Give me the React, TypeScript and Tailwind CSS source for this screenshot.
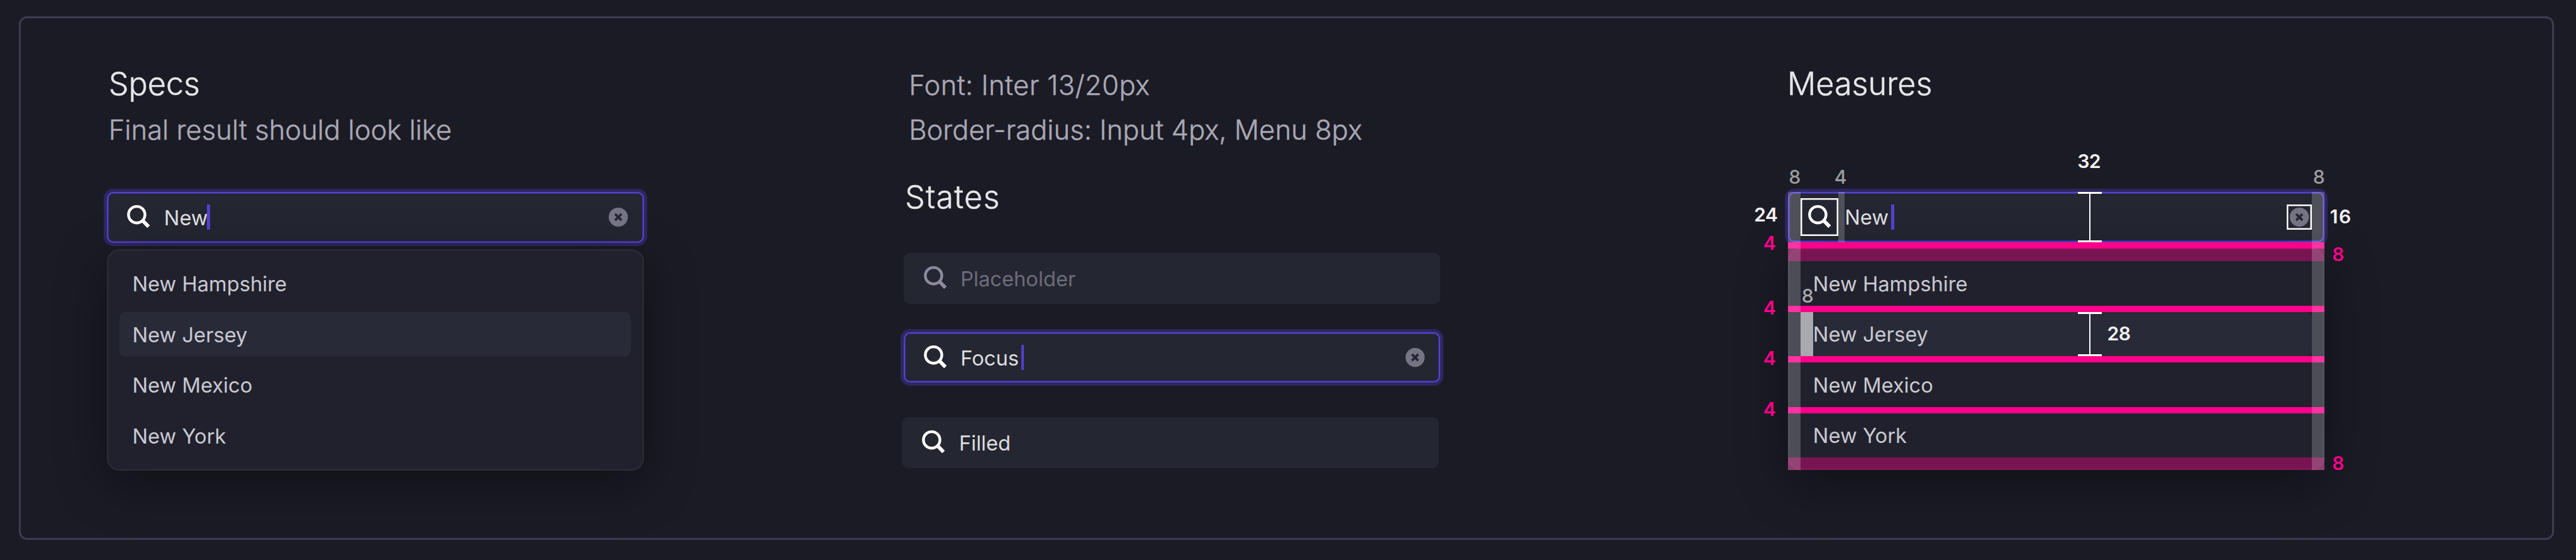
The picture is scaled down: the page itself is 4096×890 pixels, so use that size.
import type { ReactNode } from "react";

function SearchIcon({ muted, outlined }: { muted?: boolean; outlined?: boolean }) {
  return (
    <span
      className={
        "flex h-[60.4px] w-[60.4px] shrink-0 " +
        (muted ? "text-[#8c8ba0] " : "text-white ") +
        (outlined ? "shadow-[inset_0_0_0_2.5px_#ffffff]" : "")
      }
    >
      <svg viewBox="0 0 24 24" className="h-full w-full" fill="none" stroke="currentColor">
        <circle cx="10.9" cy="10.4" r="5.2" strokeWidth="1.75" />
        <path d="M14.3 13.8 18.4 18" strokeWidth="2.3" />
      </svg>
    </span>
  );
}

function ClearIcon({ outlined }: { outlined?: boolean }) {
  return (
    <span
      className={
        "ml-auto flex h-[40.2px] w-[40.2px] shrink-0 " +
        (outlined ? "shadow-[inset_0_0_0_2.5px_#ffffff]" : "")
      }
    >
      <svg viewBox="0 0 16 16" className="h-full w-full" fill="none">
        <circle cx="8" cy="8" r="6.05" fill="#747485" />
        <path d="M6 6l4 4M10 6l-4 4" stroke="#242632" strokeWidth="1.5" />
      </svg>
    </span>
  );
}

type FieldProps = {
  text: string;
  focused?: boolean;
  muted?: boolean;
  outlined?: boolean;
  caret?: string;
};

function Field({ text, focused, muted, outlined, caret }: FieldProps) {
  return (
    <div
      className={
        "flex h-[80.4px] items-center rounded-[10px] bg-[#242631] px-[20.1px] " +
        (focused
          ? "shadow-[inset_0_0_0_2.5px_#5340d0,0_0_0_5px_rgba(83,64,208,0.34)]"
          : "")
      }
    >
      <SearchIcon muted={muted} outlined={outlined} />
      <span
        className={
          "ml-[10.1px] pt-[1.4px] text-[32.7px] leading-[50.3px] " +
          (muted ? "text-[#6c6b7b]" : "text-[#dcdcdf]")
        }
      >
        {text}
      </span>
      {focused && <span className={"h-[40px] bg-[#5340d0] " + caret} />}
      {focused && <ClearIcon outlined={outlined} />}
    </div>
  );
}

const STATES = ["New Hampshire", "New Jersey", "New Mexico", "New York"];

function Menu() {
  return (
    <ul className="mt-[10.1px] flex flex-col gap-[10.1px] rounded-[20px] bg-[#20212d] p-[20.1px] shadow-[inset_0_0_0_2.5px_#2b2a36,0_20px_80px_rgba(0,0,0,0.4)]">
      {STATES.map((name) => (
        <li
          key={name}
          className={
            "flex h-[70.4px] items-center rounded-[10px] px-[20.1px] pt-[0.7px] text-[32.7px] leading-[50.3px] text-[#c9c9d1] " +
            (name === "New Jersey" ? "bg-[#282a38]" : "")
          }
        >
          {name}
        </li>
      ))}
    </ul>
  );
}

function Heading({ children, className }: { children: ReactNode; className: string }) {
  return (
    <h2
      className={
        "h-[72px] text-[50.3px] leading-[72px] font-light text-[#e6e6e8] [-webkit-text-stroke:0.5px_#e6e6e8] " +
        className
      }
    >
      {children}
    </h2>
  );
}

function Height({ className }: { className: string }) {
  return (
    <div className={"absolute left-[461.5px] flex w-[38px] flex-col items-center " + className}>
      <div className="h-[3px] w-full shrink-0 bg-white" />
      <div className="w-[2.5px] flex-1 bg-white" />
      <div className="h-[3px] w-full shrink-0 bg-white" />
    </div>
  );
}

const LABELS: [string, string][] = [
  ["8", "left-[1.7px] top-[-38.6px] text-[#9d9da1] font-medium"],
  ["4", "left-[74.2px] top-[-38.6px] text-[#9d9da1] font-medium"],
  ["8", "left-[835px] top-[-38.6px] text-[#9d9da1] font-medium"],
  ["8", "left-[22px] top-[150px] text-[#a9a9ad] font-medium"],
  ["32", "left-[460.6px] top-[-63.5px] text-[#f2f2f2] font-semibold tracking-[-0.6px]"],
  ["24", "left-[-53.6px] top-[21.8px] text-[#f2f2f2] font-semibold tracking-[-0.6px]"],
  ["16", "left-[862.2px] top-[24.3px] text-[#f2f2f2] font-semibold tracking-[1.5px]"],
  ["28", "left-[507.8px] top-[210px] text-[#f2f2f2] font-semibold tracking-[-0.6px]"],
  ["4", "left-[-38.8px] top-[66.5px] text-[#ff008a] font-semibold"],
  ["4", "left-[-38.8px] top-[169.3px] text-[#ff008a] font-semibold"],
  ["4", "left-[-38.8px] top-[249.5px] text-[#ff008a] font-semibold"],
  ["4", "left-[-38.8px] top-[329.9px] text-[#ff008a] font-semibold"],
  ["8", "left-[865.6px] top-[84.3px] text-[#ff008a] font-semibold"],
  ["8", "left-[865.6px] top-[416px] text-[#ff008a] font-semibold"],
];

function MeasureOverlay() {
  return (
    <div className="absolute inset-0">
      <div className="flex h-full flex-col pt-[80.4px]">
        <div className="h-[10.1px] bg-[#ff008a]" />
        <div className="h-[20.1px] bg-[#ff008a]/40" />
        <div className="mt-[70.4px] h-[10.1px] bg-[#ff008a]" />
        <div className="h-[70.4px] pl-[20.1px]">
          <div className="h-full w-[20.1px] bg-white/60" />
        </div>
        <div className="h-[10.1px] bg-[#ff008a]" />
        <div className="mt-[70.4px] h-[10.1px] bg-[#ff008a]" />
        <div className="mt-[70.4px] h-[20.1px] bg-[#ff008a]/40" />
      </div>
      <div className="absolute inset-y-0 left-0 w-[20.1px] bg-white/20" />
      <div className="absolute inset-y-0 right-0 w-[20.1px] bg-white/20" />
      <div className="absolute top-0 left-[80.3px] h-[80.4px] w-[10.1px] bg-white/20" />
      <Height className="top-0 h-[80.4px]" />
      <Height className="top-[191.1px] h-[70.4px]" />
      {LABELS.map(([value, className], i) => (
        <span
          key={i}
          className={"absolute text-[30.2px] leading-[30.2px] whitespace-nowrap " + className}
        >
          {value}
        </span>
      ))}
    </div>
  );
}

export default function App() {
  return (
    <div className="h-[890px] w-[4096px] overflow-hidden bg-[#1b1b25] pt-[26px] pl-[30px] font-['Inter',sans-serif]">
      <main className="flex h-[832px] w-[4031px] items-start rounded-[13px] border-[3px] border-[#3b3d52] pt-[68.3px] pl-[137.2px]">
        <section className="w-[853.4px]">
          <Heading className="ml-[2.5px]">Specs</Heading>
          <p className="mt-[2.2px] ml-[2.5px] text-[43.6px] leading-[72px] font-light text-[#a9a8b4] [-webkit-text-stroke:0.5px_#a9a8b4]">
            Final result should look like
          </p>
          <div className="mt-[61.8px]">
            <Field text="New" focused caret="ml-[-1.5px] w-[4.5px]" />
            <Menu />
          </div>
        </section>

        <section className="ml-[413px] w-[853.4px] pt-[2.6px]">
          <div className="ml-[8.6px] text-[43.6px] leading-[71.4px] font-light whitespace-nowrap text-[#a9a8b4] [-webkit-text-stroke:0.5px_#a9a8b4]">
            <p className="tracking-[0.35px]">Font: Inter 13/20px</p>
            <p>Border-radius: Input 4px, Menu 8px</p>
          </div>
          <Heading className="mt-[33.8px] ml-[2.4px] tracking-[1.2px]">States</Heading>
          <div className="mt-[53.9px]">
            <Field text="Placeholder" muted />
          </div>
          <div className="mt-[45px]">
            <Field text="Focus" focused caret="ml-[4px] w-[3.5px]" />
          </div>
          <div className="mt-[55px] mr-[2.2px] ml-[-2.2px]">
            <Field text="Filled" />
          </div>
        </section>

        <section className="ml-[552.7px] w-[853.4px]">
          <Heading className="ml-[-0.7px]">Measures</Heading>
          <div className="relative mt-[135.4px]">
            <Field text="New" focused outlined caret="ml-[4px] w-[5px]" />
            <Menu />
            <MeasureOverlay />
          </div>
        </section>
      </main>
    </div>
  );
}
